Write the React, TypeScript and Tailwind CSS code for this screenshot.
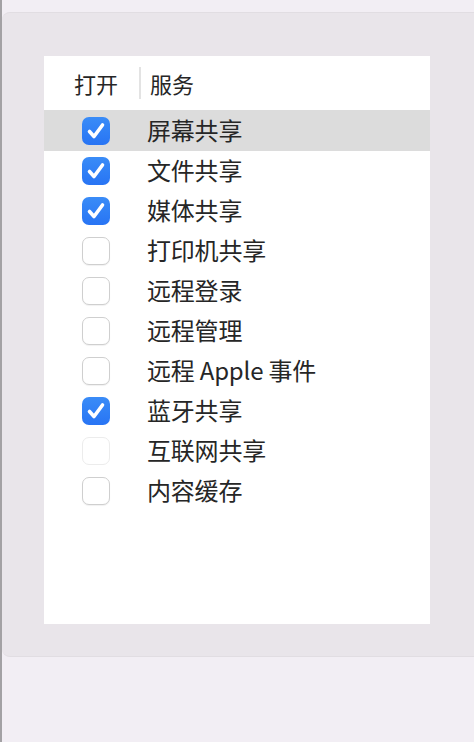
import React from "react";

interface Service {
  name: string;
  on: boolean;
  disabled?: boolean;
}

const services: Service[] = [
  { name: "屏幕共享", on: true },
  { name: "文件共享", on: true },
  { name: "媒体共享", on: true },
  { name: "打印机共享", on: false },
  { name: "远程登录", on: false },
  { name: "远程管理", on: false },
  { name: "远程 Apple 事件", on: false },
  { name: "蓝牙共享", on: true },
  { name: "互联网共享", on: false, disabled: true },
  { name: "内容缓存", on: false },
];

const Checkbox: React.FC<{ on: boolean; disabled?: boolean }> = ({ on, disabled }) => {
  if (on) {
    return (
      <div className="w-[28px] h-[28px] rounded-[7px] bg-gradient-to-b from-[#3a8cf7] to-[#2874f4] flex items-center justify-center">
        <svg width="22" height="22" viewBox="0 0 22 22" fill="none">
          <path d="M4.5 11.5 L9 16.5 L17.5 5" stroke="white" strokeWidth="3.6" strokeLinecap="round" strokeLinejoin="round" />
        </svg>
      </div>
    );
  }
  return (
    <div
      className={`w-[28px] h-[28px] rounded-[7px] bg-white border ${
        disabled ? "border-[#ececec]" : "border-[#cfcfcf] shadow-[0_1px_1px_rgba(0,0,0,0.06)]"
      }`}
    />
  );
};

export default function App() {
  return (
    <div
      className="w-[474px] h-[742px] bg-[#f2eef4] border-l-2 border-[#a3a1a4] overflow-hidden"
      style={{ fontFamily: '"Noto Sans CJK SC", "Noto Sans", sans-serif' }}
    >
      <div className="pt-[12px]">
        <div className="h-[645px] bg-[#e9e5ea] rounded-l-[8px] border-t border-b border-[#e1dde2] pt-[43px] pl-[42px]">
          <div className="w-[386px] h-[568px] bg-white">
            {/* header */}
            <div className="h-[54px] flex items-center text-[22px] text-[#262626]">
              <span className="ml-[30px] w-[65px] leading-none -mt-[1px]">打开</span>
              <div className="w-[2px] h-[32px] bg-[#e3e3e3]" />
              <span className="ml-[9px] leading-none -mt-[1px]">服务</span>
            </div>
            {/* rows */}
            <div>
              {services.map((s, i) => (
                <div
                  key={s.name}
                  className={`flex items-center h-[40px] ${i === 0 ? "bg-[#dcdcdc] h-[41px]" : ""}`}
                >
                  <div className="ml-[38px] w-[65px]">
                    <Checkbox on={s.on} disabled={s.disabled} />
                  </div>
                  <span className="text-[24px] text-[#262626] leading-none -mt-[2px] tracking-[-0.2px]">{s.name}</span>
                </div>
              ))}
            </div>
          </div>
        </div>
      </div>
    </div>
  );
}
